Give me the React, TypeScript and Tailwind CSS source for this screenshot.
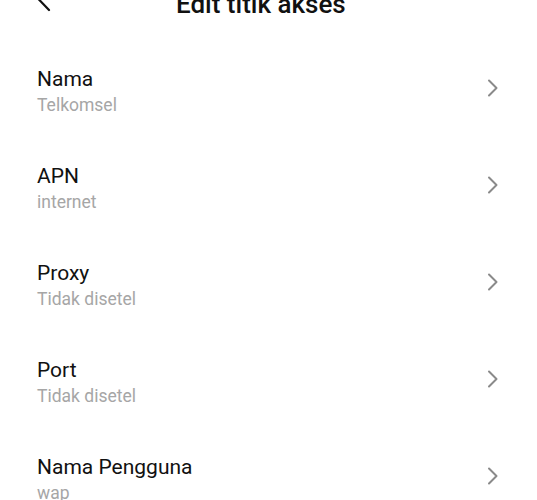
import React from "react";

const rows = [
  { title: "Nama", sub: "Telkomsel" },
  { title: "APN", sub: "internet" },
  { title: "Proxy", sub: "Tidak disetel" },
  { title: "Port", sub: "Tidak disetel" },
  { title: "Nama Pengguna", sub: "wap" },
];

function Chevron() {
  return (
    <svg className="mb-[5px]" width="12" height="18" viewBox="0 0 12 18" fill="none">
      <path d="M2 1.5 L9.5 9 L2 16.5" stroke="#8a8a8a" strokeWidth="2" strokeLinecap="round" strokeLinejoin="round" />
    </svg>
  );
}

export default function App() {
  return (
    <div className="w-[537px] h-[500px] overflow-hidden bg-white" style={{ fontFamily: "Roboto, 'Noto Sans', sans-serif" }}>
      <div className="-mt-[32px] h-[72px] flex items-center">
        <div className="pl-[34px] mb-[12px] flex items-center">
          <svg width="18" height="28" viewBox="0 0 18 28" fill="none">
            <path d="M15 1 L3 13.5 L15 26" stroke="#111" strokeWidth="2.2" strokeLinecap="round" strokeLinejoin="round" />
          </svg>
        </div>
        <div className="ml-[124px] text-[26px] font-medium text-[#111] leading-[32px] whitespace-nowrap">Edit titik akses</div>
      </div>
      <div className="flex flex-col">
        {rows.map((r) => (
          <div key={r.title} className="h-[97px] flex items-center pt-[4px] pl-[37px] pr-[38px]">
            <div className="flex-1 flex flex-col">
              <div className="text-[21px] leading-[26px] text-[#111]">{r.title}</div>
              <div className="mt-[2px] text-[17.5px] leading-[22px] text-[#a6a6a6]">{r.sub}</div>
            </div>
            <Chevron />
          </div>
        ))}
      </div>
    </div>
  );
}
